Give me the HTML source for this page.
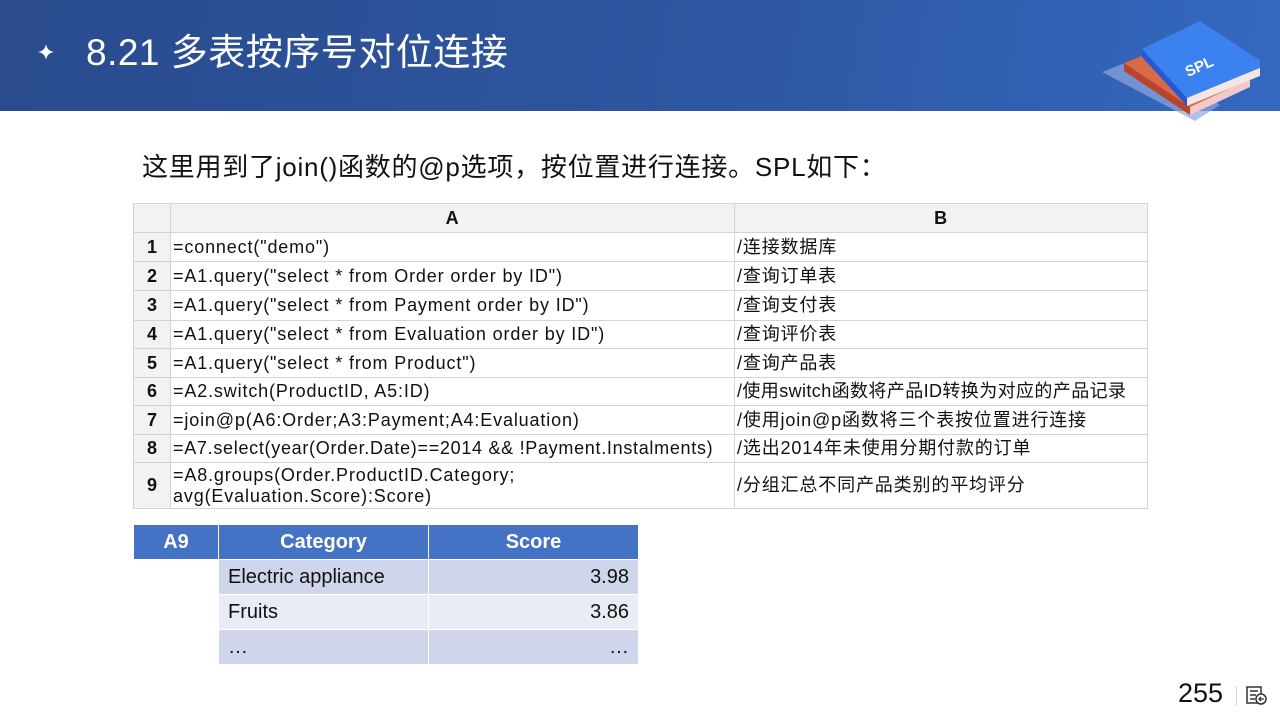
<!DOCTYPE html>
<html><head><meta charset="utf-8"><style>
*{margin:0;padding:0;box-sizing:border-box}
body{width:1280px;height:720px;position:relative;background:#fff;overflow:hidden;font-family:"Liberation Sans","Noto Sans CJK SC",sans-serif;}
.hdr{position:absolute;left:0;top:0;width:1280px;height:111px;background:linear-gradient(100deg,#2a4b8e 0%,#2d56a0 55%,#3468c0 100%);}
.title{position:absolute;left:86px;top:29px;color:#fff;font-size:37px;line-height:48px;letter-spacing:0.5px;}
.star{position:absolute;left:38px;top:44px;}
.sub{position:absolute;left:142px;top:148px;font-size:26px;line-height:38px;color:#111;letter-spacing:0.75px}
table{border-collapse:collapse;position:absolute;}
.t1{left:133px;top:203px;font-size:18px;color:#111;}
.t1 td{border:1px solid #d4d4d4;padding:0 2px;white-space:nowrap;line-height:21px;letter-spacing:0.85px}
.t1 tr.h td{background:#f2f2f2;font-weight:bold;text-align:center;height:29px}
.t1 td.n{background:#f2f2f2;font-weight:bold;text-align:center;width:37px;letter-spacing:0}
.r{height:29px}
.t2{left:133px;top:524px;font-size:20px;color:#111;border-collapse:separate;border-spacing:1px}
.t2 td{height:34px;padding:0 9px}
.bh{background:#4472c4;color:#fff;font-weight:bold;text-align:center}
.d1{background:#cfd5ea}.d2{background:#e9ebf5}
.pg{position:absolute;left:1178px;top:678px;font-size:27px;color:#111}
</style></head><body>
<div class="hdr"></div>
<svg class="star" width="16" height="16" viewBox="0 0 16 16"><path d="M8 0 Q9 7 16 8 Q9 9 8 16 Q7 9 0 8 Q7 7 8 0Z" fill="#fff"/></svg>
<div class="title">8.21 多表按序号对位连接</div>
<svg style="position:absolute;left:1100px;top:15px" width="160" height="108" viewBox="0 0 160 108">
<polygon points="2,57 45,40 120,90 95,106" fill="#8ea6e0" opacity="0.7"/>
<polygon points="24,48 85,24 150,64 90,92" fill="#d86a46"/>
<polygon points="24,48 24,56 90,100 90,92" fill="#b9442a"/>
<polygon points="90,92 150,64 150,72 90,100" fill="#f2c8c8"/>
<polygon points="50,34 108,6 175,50 95,83" fill="#3b82f0" transform="translate(-8,0)"/>
<polygon points="42,34 42,42 87,91 87,83" fill="#2458d8"/>
<polygon points="87,83 167,50 167,58 87,91" fill="#f5e6e6"/>
<text x="88" y="62" fill="#fff" font-size="15" font-weight="bold" transform="rotate(-24 88 62)" font-family="Liberation Sans">SPL</text>
</svg>
<div class="sub">这里用到了join()函数的@p选项，按位置进行连接。SPL如下：</div>
<table class="t1">
<tr class="h"><td style="width:37px"></td><td style="width:564px">A</td><td style="width:413px">B</td></tr>
<tr class="r"><td class="n">1</td><td>=connect("demo")</td><td>/连接数据库</td></tr>
<tr class="r"><td class="n">2</td><td>=A1.query("select * from Order order by ID")</td><td>/查询订单表</td></tr>
<tr style="height:30px"><td class="n">3</td><td>=A1.query("select * from Payment order by ID")</td><td>/查询支付表</td></tr>
<tr style="height:28px"><td class="n">4</td><td>=A1.query("select * from Evaluation order by ID")</td><td>/查询评价表</td></tr>
<tr class="r"><td class="n">5</td><td>=A1.query("select * from Product")</td><td>/查询产品表</td></tr>
<tr style="height:28px"><td class="n">6</td><td>=A2.switch(ProductID, A5:ID)</td><td style="letter-spacing:0.4px">/使用switch函数将产品ID转换为对应的产品记录</td></tr>
<tr class="r"><td class="n">7</td><td>=join@p(A6:Order;A3:Payment;A4:Evaluation)</td><td>/使用join@p函数将三个表按位置进行连接</td></tr>
<tr style="height:28px"><td class="n">8</td><td style="letter-spacing:0.7px">=A7.select(year(Order.Date)==2014 &amp;&amp; !Payment.Instalments)</td><td>/选出2014年未使用分期付款的订单</td></tr>
<tr style="height:46px"><td class="n">9</td><td>=A8.groups(Order.ProductID.Category;<br>avg(Evaluation.Score):Score)</td><td>/分组汇总不同产品类别的平均评分</td></tr>
</table>
<table class="t2">
<tr><td class="bh" style="width:84px">A9</td><td class="bh" style="width:209px">Category</td><td class="bh" style="width:209px">Score</td></tr>
<tr><td></td><td class="d1">Electric appliance</td><td class="d1" style="text-align:right">3.98</td></tr>
<tr><td></td><td class="d2">Fruits</td><td class="d2" style="text-align:right">3.86</td></tr>
<tr><td></td><td class="d1">…</td><td class="d1" style="text-align:right">…</td></tr>
</table>
<div class="pg">255</div>
<div style="position:absolute;left:1236px;top:686px;width:1px;height:20px;background:#c8d4ec"></div>
<svg style="position:absolute;left:1246px;top:686px" width="22" height="20" viewBox="0 0 22 20"><rect x="1" y="1" width="14" height="16" fill="none" stroke="#333" stroke-width="1.5"/><path d="M4 5h8M4 9h6M4 13h5" stroke="#333" stroke-width="1.5"/><circle cx="15" cy="13" r="5" fill="#fff" stroke="#333" stroke-width="1.5"/><path d="M18 13h-5M15 11l-2 2 2 2" fill="none" stroke="#333" stroke-width="1.3"/></svg>
</body></html>
